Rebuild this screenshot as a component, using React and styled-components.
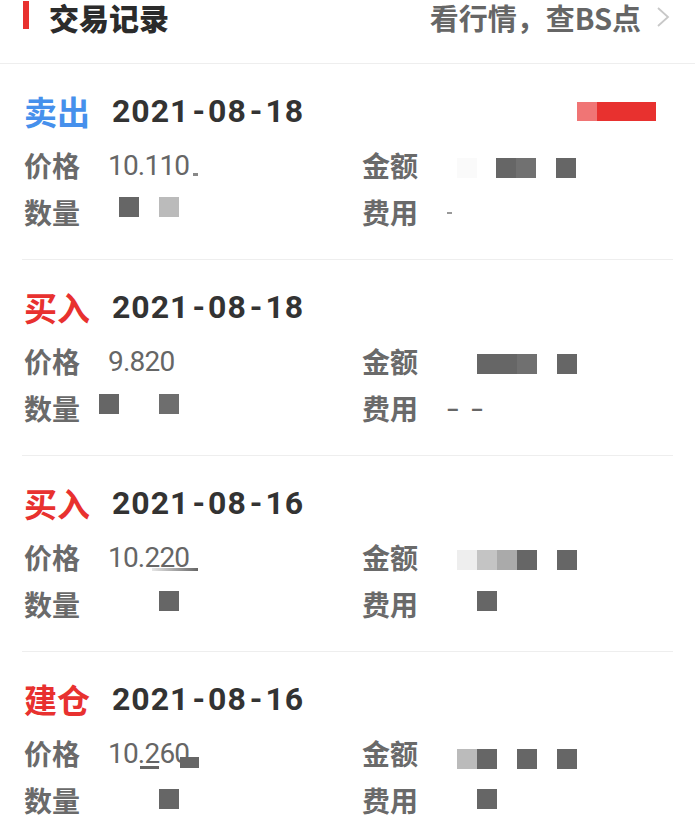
import React from "react";
import styled, { createGlobalStyle } from "styled-components";

const GlobalStyle = createGlobalStyle`
  html, body { margin: 0; padding: 0; background: #fff; }
  body { font-family: "Noto Sans CJK SC", "Noto Sans", sans-serif; }
  * { box-sizing: border-box; }
`;

const Page = styled.div`
  width: 695px;
  background: #fff;
`;

const Header = styled.div`
  height: 64px;
  display: flex;
  align-items: flex-start;
  justify-content: space-between;
  padding: 0 23px 0 23px;
  border-bottom: 1px solid #eeeeee;
`;

const TitleWrap = styled.div`
  display: flex;
  align-items: center;
  height: 34px;
  gap: 20px;
`;

const RedBar = styled.span`
  width: 6px;
  height: 28px;
  margin-top: -4px;
  background: #e8312f;
  display: block;
`;

const Title = styled.h2`
  margin: 0;
  font-size: 30px;
  line-height: 34px;
  font-weight: 900;
  color: #2b2b2b;
  font-family: "Noto Sans CJK SC", sans-serif;
`;

const LinkWrap = styled.div`
  display: flex;
  align-items: center;
  height: 34px;
  gap: 11px;
`;

const LinkText = styled.span`
  font-size: 29px;
  line-height: 34px;
  font-weight: 700;
  color: #666;
  font-family: "Noto Sans CJK SC", sans-serif;
`;

const Card = styled.section`
  margin: 0 22px;
  padding: 31px 17px 23px 2px;
  border-bottom: 1px solid #eeeeee;
  &:last-child { border-bottom: none; }
`;

const CardHead = styled.div`
  display: flex;
  align-items: center;
  height: 32px;
  margin-bottom: 15px;
`;

const TypeLabel = styled.span`
  font-size: 33px;
  line-height: 36px;
  font-weight: 700;
  color: ${(p) => (p.$kind === "sell" ? "#4690ec" : "#e8312f")};
  margin-right: 22px;
  font-family: "Noto Sans CJK SC", sans-serif;
`;

const DateText = styled.span`
  font-family: Roboto, "Noto Sans", sans-serif;
  font-size: 32px;
  line-height: 36px;
  font-weight: 700;
  color: #333;
  letter-spacing: 1px;
`;

const DateSep = styled.span`
  margin: 0 2px 0 3px;
`;

const Badge = styled.div`
  margin-left: auto;
  display: flex;
  height: 19px;
`;

const BadgeSeg = styled.span`
  display: block;
  width: ${(p) => p.$w}px;
  height: 19px;
  background: ${(p) => p.$c};
`;

const Row = styled.div`
  display: grid;
  grid-template-columns: 338px 1fr;
  height: 47px;
`;

const Field = styled.div`
  display: flex;
  align-items: center;
`;

const Label = styled.span`
  width: ${(p) => p.$w}px;
  flex: none;
  font-size: 28px;
  line-height: 47px;
  font-weight: 700;
  color: #6a6a6a;
  font-family: "Noto Sans CJK SC", sans-serif;
`;

const ValueCell = styled.div`
  position: relative;
  height: 47px;
  flex: 1;
  display: flex;
  align-items: center;
`;

const ValueText = styled.span`
  font-family: Roboto, "Noto Sans", sans-serif;
  font-size: 28px;
  line-height: 47px;
  color: #666;
  letter-spacing: -0.8px;
  padding-left: ${(p) => p.$pl || 0}px;
`;

const Dashes = styled(ValueText)`
  font-size: 30px;
  letter-spacing: 9px;
  transform: scaleX(1.4);
  transform-origin: left center;
`;

const Mask = styled.span`
  position: absolute;
  display: block;
`;

function MaskPiece({ x, y, w = 20, h = 20, c = "#666", g }) {
  return (
    <Mask
      style={{
        left: x,
        top: y,
        width: w,
        height: h,
        background: g || c,
      }}
    />
  );
}

const chevron = (
  <svg width="20" height="20" viewBox="0 0 20 20" fill="none">
    <polyline points="6,1 16,10 6,19" stroke="#c8c8c8" strokeWidth="1.8" fill="none" />
  </svg>
);

const records = [
  {
    kind: "sell",
    type: "卖出",
    date: "2021-08-18",
    badge: true,
    price: "10.110",
    priceMask: [{ x: 94, y: 31, w: 5, h: 3, c: "#888" }],
    amountMask: [
      { x: 10, y: 16, c: "#fafafa" },
      { x: 49, y: 16, c: "#666" },
      { x: 69, y: 16, c: "#717171" },
      { x: 109, y: 16, c: "#666" },
    ],
    qtyMask: [
      { x: 20, y: 8, c: "#666" },
      { x: 60, y: 8, c: "#bbbbbb" },
    ],
    feeMask: [{ x: 0, y: 23, w: 5, h: 2, c: "#999" }],
  },
  {
    kind: "buy",
    type: "买入",
    date: "2021-08-18",
    price: "9.820",
    amountMask: [
      { x: 30, y: 16, w: 40, c: "#666" },
      { x: 70, y: 16, c: "#707070" },
      { x: 110, y: 16, c: "#666" },
    ],
    qtyMask: [
      { x: 0, y: 9, c: "#666" },
      { x: 60, y: 9, c: "#6e6e6e" },
    ],
    fee: "--",
  },
  {
    kind: "buy",
    type: "买入",
    date: "2021-08-16",
    price: "10.220",
    priceMask: [
      { x: 53, y: 34, w: 46, h: 3, g: "linear-gradient(90deg, #e6e6e6, #999 60%, #666)" },
    ],
    amountMask: [
      { x: 10, y: 16, c: "#eeeeee" },
      { x: 30, y: 16, c: "#c4c4c4" },
      { x: 50, y: 16, c: "#aaaaaa" },
      { x: 70, y: 16, c: "#666" },
      { x: 110, y: 16, c: "#666" },
    ],
    qtyMask: [{ x: 60, y: 10, c: "#666" }],
    feeMask: [{ x: 30, y: 10, c: "#666" }],
  },
  {
    kind: "buy",
    type: "建仓",
    date: "2021-08-16",
    price: "10.260",
    priceMask: [
      { x: 41, y: 36, w: 19, h: 3, c: "#666" },
      { x: 81, y: 27, w: 19, h: 11, c: "#666" },
    ],
    amountMask: [
      { x: 10, y: 19, c: "#bbbbbb" },
      { x: 30, y: 19, c: "#666" },
      { x: 70, y: 19, c: "#666" },
      { x: 110, y: 19, c: "#666" },
    ],
    qtyMask: [{ x: 60, y: 12, c: "#666" }],
    feeMask: [{ x: 30, y: 12, c: "#666" }],
  },
];

function Masks({ list }) {
  return (list || []).map((m, i) => <MaskPiece key={i} {...m} />);
}

function DateLabel({ value }) {
  const parts = value.split("-");
  return (
    <DateText>
      {parts.map((p, i) => (
        <React.Fragment key={i}>
          {i > 0 && <DateSep>-</DateSep>}
          {p}
        </React.Fragment>
      ))}
    </DateText>
  );
}

export default function App() {
  return (
    <Page>
      <GlobalStyle />
      <Header>
        <TitleWrap>
          <RedBar />
          <Title>交易记录</Title>
        </TitleWrap>
        <LinkWrap>
          <LinkText>看行情，查BS点</LinkText>
          {chevron}
        </LinkWrap>
      </Header>
      {records.map((r, i) => (
        <Card key={i}>
          <CardHead>
            <TypeLabel $kind={r.kind}>{r.type}</TypeLabel>
            <DateLabel value={r.date} />
            {r.badge && (
              <Badge>
                <BadgeSeg $w={20} $c="#f07575" />
                <BadgeSeg $w={59} $c="#e8312f" />
              </Badge>
            )}
          </CardHead>
          <Row>
            <Field>
              <Label $w={75}>价格</Label>
              <ValueCell>
                <ValueText $pl={9}>{r.price}</ValueText>
                <Masks list={r.priceMask} />
              </ValueCell>
            </Field>
            <Field>
              <Label $w={85}>金额</Label>
              <ValueCell>
                <Masks list={r.amountMask} />
              </ValueCell>
            </Field>
          </Row>
          <Row>
            <Field>
              <Label $w={75}>数量</Label>
              <ValueCell>
                <Masks list={r.qtyMask} />
              </ValueCell>
            </Field>
            <Field>
              <Label $w={85}>费用</Label>
              <ValueCell>
                {r.fee && <Dashes>{r.fee}</Dashes>}
                <Masks list={r.feeMask} />
              </ValueCell>
            </Field>
          </Row>
        </Card>
      ))}
    </Page>
  );
}
